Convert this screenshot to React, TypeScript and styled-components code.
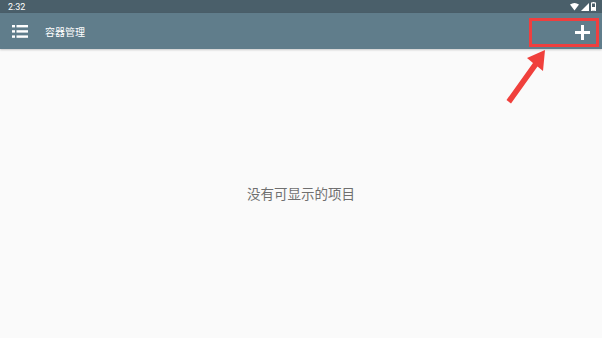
import React from 'react';
import styled, { createGlobalStyle } from 'styled-components';

const GlobalStyle = createGlobalStyle`
  html, body {
    margin: 0;
    padding: 0;
    background: #fafafa;
    font-family: Roboto, "Noto Sans CJK SC", sans-serif;
  }
`;

const Screen = styled.div`
  width: 602px;
  height: 338px;
  display: flex;
  flex-direction: column;
  position: relative;
  overflow: hidden;
  background: #fafafa;
`;

const StatusBar = styled.div`
  height: 13px;
  background: #4a5f6a;
  display: flex;
  align-items: center;
  justify-content: space-between;
  padding: 0 6px 0 8px;
  color: #ffffff;
  font-size: 9px;
`;

const StatusIcons = styled.div`
  display: flex;
  align-items: center;
  gap: 2px;
`;

const Toolbar = styled.div`
  height: 36px;
  background: #607d8b;
  display: flex;
  align-items: center;
  padding: 0 0 0 12px;
  box-shadow: 0 1px 2px rgba(0, 0, 0, 0.2);
`;

const Title = styled.div`
  margin-left: 17px;
  color: #ffffff;
  font-size: 10px;
  flex: 1;
`;

const AddButton = styled.div`
  width: 70px;
  height: 29px;
  margin-right: 3px;
  margin-top: 2px;
  border: 3px solid #ef3f3f;
  box-sizing: border-box;
  display: flex;
  align-items: center;
  justify-content: flex-end;
  padding-right: 6px;
`;

const Body = styled.div`
  flex: 1;
  display: flex;
  align-items: center;
  justify-content: center;
  padding-bottom: 2px;
`;

const EmptyText = styled.div`
  color: #6f6f6f;
  font-size: 13.5px;
  font-family: "Noto Sans CJK SC", sans-serif;
`;

const Arrow = styled.svg`
  position: absolute;
  left: 500px;
  top: 45px;
`;

export default function App() {
  return (
    <Screen>
      <GlobalStyle />
      <StatusBar>
        <span>2:32</span>
        <StatusIcons>
          <svg width="9" height="8" viewBox="0 0 9 8">
            <path d="M0 1.5 Q4.5 -1.5 9 1.5 L4.5 7.5 Z" fill="#fff" />
          </svg>
          <svg width="8" height="8" viewBox="0 0 8 8">
            <path d="M0 8 L8 0 L8 8 Z" fill="#fff" />
          </svg>
          <svg width="5" height="9" viewBox="0 0 5 9">
            <rect x="1.5" y="0" width="2" height="1" fill="#fff" />
            <rect x="0.5" y="1" width="4" height="8" fill="none" stroke="#fff" strokeWidth="1" />
            <rect x="1" y="5" width="3" height="3.5" fill="#fff" />
          </svg>
        </StatusIcons>
      </StatusBar>
      <Toolbar>
        <svg width="16" height="13" viewBox="0 0 16 13">
          <rect x="0" y="0" width="3" height="2.4" fill="#fff" />
          <rect x="0" y="5.2" width="3" height="2.4" fill="#fff" />
          <rect x="0" y="10.4" width="3" height="2.4" fill="#fff" />
          <rect x="4.5" y="0" width="11.5" height="2.4" fill="#fff" />
          <rect x="4.5" y="5.2" width="11.5" height="2.4" fill="#fff" />
          <rect x="4.5" y="10.4" width="11.5" height="2.4" fill="#fff" />
        </svg>
        <Title>容器管理</Title>
        <AddButton>
          <svg width="15" height="15" viewBox="0 0 15 15">
            <rect x="6" y="0" width="3" height="15" fill="#fff" />
            <rect x="0" y="6" width="15" height="3" fill="#fff" />
          </svg>
        </AddButton>
      </Toolbar>
      <Body>
        <EmptyText>没有可显示的项目</EmptyText>
      </Body>
      <Arrow width="60" height="62" viewBox="0 0 60 62">
        <path
          d="M45 5 L43 26 L37.5 21.5 L11 58.5 L6.5 55 L33 18 L27 13 Z"
          fill="#f0403c"
        />
      </Arrow>
    </Screen>
  );
}
